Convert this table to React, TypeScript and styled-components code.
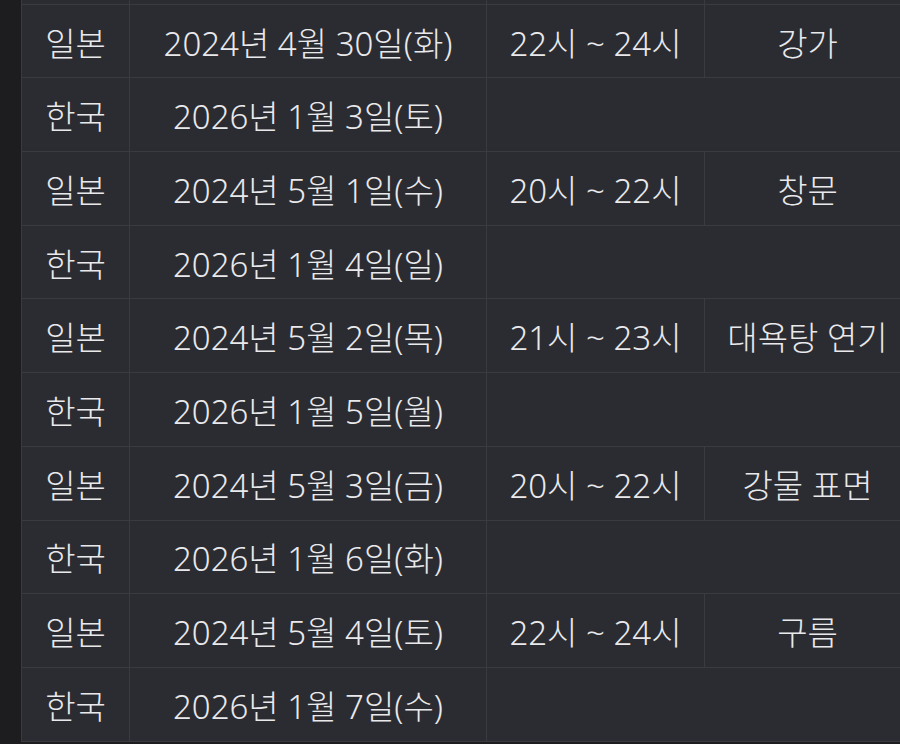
import { Fragment } from "react"
import styled, { createGlobalStyle } from "styled-components"

const GlobalStyle = createGlobalStyle`
  html, body {
    margin: 0;
    padding: 0;
    height: 100%;
    overflow: hidden;
    background: #1d1d20;
  }
`

const Page = styled.div`
  display: flex;
  height: 744px;
  overflow: hidden;
  font-family: "Noto Sans", "Noto Sans CJK KR", sans-serif;
`

const Gutter = styled.div`
  flex: 0 0 21px;
  background: #1d1d20;
`

const Scroller = styled.div`
  flex: 1 0 auto;
  overflow: hidden;
`

const Table = styled.table`
  border-collapse: collapse;
  table-layout: fixed;
  width: 889px;
  margin-top: -70px;
  background: #2b2c31;
  color: #e9e9ec;
  font-size: 33px;
  font-weight: 300;
`

const Col = styled.col<{ $w: number }>`
  width: ${(p) => p.$w}px;
`

const Cell = styled.td`
  border: 1px solid #3a3b41;
  height: 68.7px;
  padding: 4px 0 0;
  box-sizing: content-box;
  text-align: center;
  vertical-align: middle;
  white-space: nowrap;
  line-height: 1;
`

type Entry = {
  jp: string
  kr: string
  time: string
  place: string
}

const entries: Entry[] = [
  { jp: "2024년 4월 30일(화)", kr: "2026년 1월 3일(토)", time: "22시 ~ 24시", place: "강가" },
  { jp: "2024년 5월 1일(수)", kr: "2026년 1월 4일(일)", time: "20시 ~ 22시", place: "창문" },
  { jp: "2024년 5월 2일(목)", kr: "2026년 1월 5일(월)", time: "21시 ~ 23시", place: "대욕탕 연기" },
  { jp: "2024년 5월 3일(금)", kr: "2026년 1월 6일(화)", time: "20시 ~ 22시", place: "강물 표면" },
  { jp: "2024년 5월 4일(토)", kr: "2026년 1월 7일(수)", time: "22시 ~ 24시", place: "구름" },
]

export default function App() {
  return (
    <>
      <GlobalStyle />
      <Page>
        <Gutter />
        <Scroller>
          <Table>
            <colgroup>
              <Col $w={108} />
              <Col $w={357} />
              <Col $w={218} />
              <Col $w={206} />
            </colgroup>
            <tbody>
              {/* previous row, scrolled almost out of view */}
              <tr>
                <Cell />
                <Cell />
                <Cell />
                <Cell />
              </tr>
              {entries.map((e) => (
                <Fragment key={e.jp}>
                  <tr>
                    <Cell>일본</Cell>
                    <Cell>{e.jp}</Cell>
                    <Cell>{e.time}</Cell>
                    <Cell>{e.place}</Cell>
                  </tr>
                  <tr>
                    <Cell>한국</Cell>
                    <Cell>{e.kr}</Cell>
                    <Cell colSpan={2} />
                  </tr>
                </Fragment>
              ))}
            </tbody>
          </Table>
        </Scroller>
      </Page>
    </>
  )
}
